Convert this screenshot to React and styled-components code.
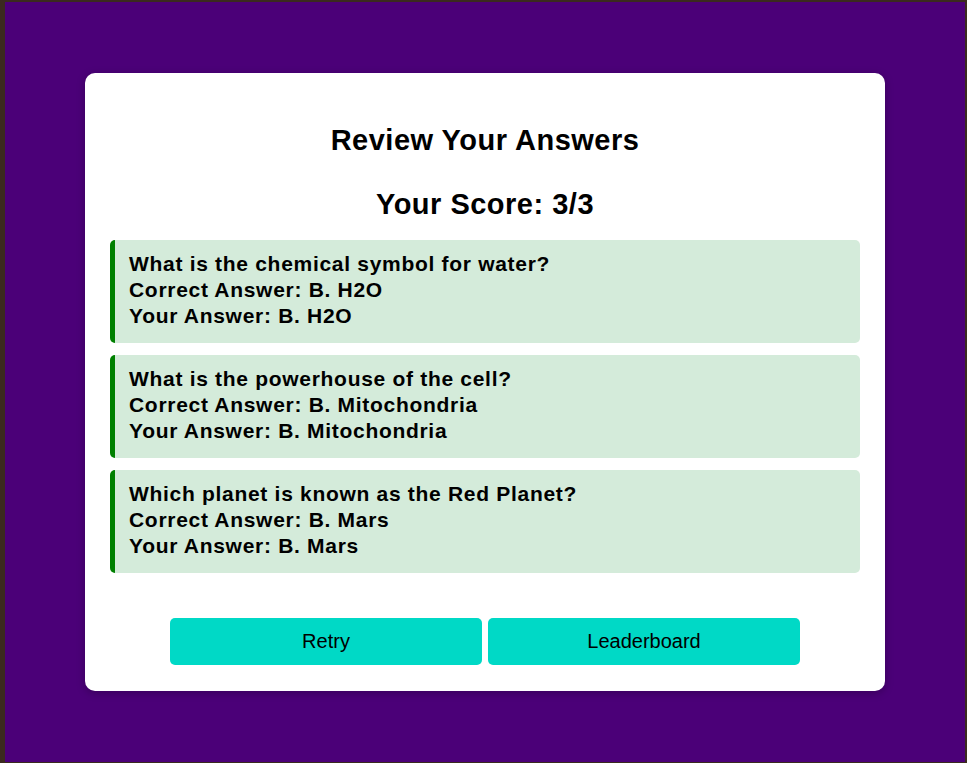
import styled, { createGlobalStyle } from "styled-components";

const GlobalStyle = createGlobalStyle`
  html, body {
    margin: 0;
    padding: 0;
  }
  body {
    font-family: "Liberation Sans", Arial, sans-serif;
    background: #3b2a1f;
  }
`;

const results = [
  {
    question: "What is the chemical symbol for water?",
    correct: "B. H2O",
    yours: "B. H2O",
  },
  {
    question: "What is the powerhouse of the cell?",
    correct: "B. Mitochondria",
    yours: "B. Mitochondria",
  },
  {
    question: "Which planet is known as the Red Planet?",
    correct: "B. Mars",
    yours: "B. Mars",
  },
];

const App = () => {
  const score = results.filter((r) => r.correct === r.yours).length;

  return (
    <>
      <GlobalStyle />
      <Frame>
        <Page>
          <Card>
            <Title>Review Your Answers</Title>
            <Score>
              Your Score: {score}/{results.length}
            </Score>
            <List>
              {results.map((r) => (
                <Item key={r.question} correct={r.correct === r.yours}>
                  <Line>{r.question}</Line>
                  <Line>Correct Answer: {r.correct}</Line>
                  <Line>Your Answer: {r.yours}</Line>
                </Item>
              ))}
            </List>
            <ButtonRow>
              <Button>Retry</Button>
              <Button>Leaderboard</Button>
            </ButtonRow>
          </Card>
        </Page>
      </Frame>
    </>
  );
};

export default App;

const Frame = styled.div`
  width: 967px;
  height: 763px;
  box-sizing: border-box;
  border-style: solid;
  border-color: #3b2a1f;
  border-width: 2px 2px 1px 5px;
`;

const Page = styled.div`
  height: 100%;
  background: #4b0078;
  display: flex;
  justify-content: center;
  padding-top: 71px;
  box-sizing: border-box;
`;

const Card = styled.div`
  width: 800px;
  height: 618px;
  box-sizing: border-box;
  background: #ffffff;
  border-radius: 10px;
  box-shadow: 0 2px 8px rgba(0, 0, 0, 0.25);
  padding: 0 25px 26px;
  display: flex;
  flex-direction: column;
`;

const Title = styled.h2`
  margin: 50px 0 0;
  font-size: 29px;
  line-height: 34px;
  letter-spacing: 0.5px;
  font-weight: 700;
  text-align: center;
  color: #000;
`;

const Score = styled(Title)`
  margin-top: 30px;
`;

const List = styled.div`
  margin-top: 19px;
  display: flex;
  flex-direction: column;
  gap: 12px;
`;

const Item = styled.div`
  height: 103px;
  box-sizing: border-box;
  background: ${(props) => (props.correct ? "#d4ebda" : "#f8d7da")};
  border-left: 5px solid ${(props) => (props.correct ? "#008000" : "#cc0000")};
  border-radius: 5px;
  padding: 11px 14px 0;
`;

const Line = styled.div`
  font-size: 21px;
  line-height: 26px;
  letter-spacing: 0.7px;
  font-weight: 700;
  color: #000;
`;

const ButtonRow = styled.div`
  margin-top: auto;
  display: flex;
  justify-content: center;
  gap: 6px;
`;

const Button = styled.button`
  width: 312px;
  height: 47px;
  border: none;
  border-radius: 5px;
  background: #00d9c6;
  color: #000;
  font-family: "Liberation Sans", Arial, sans-serif;
  font-size: 20px;
  cursor: pointer;
`;
